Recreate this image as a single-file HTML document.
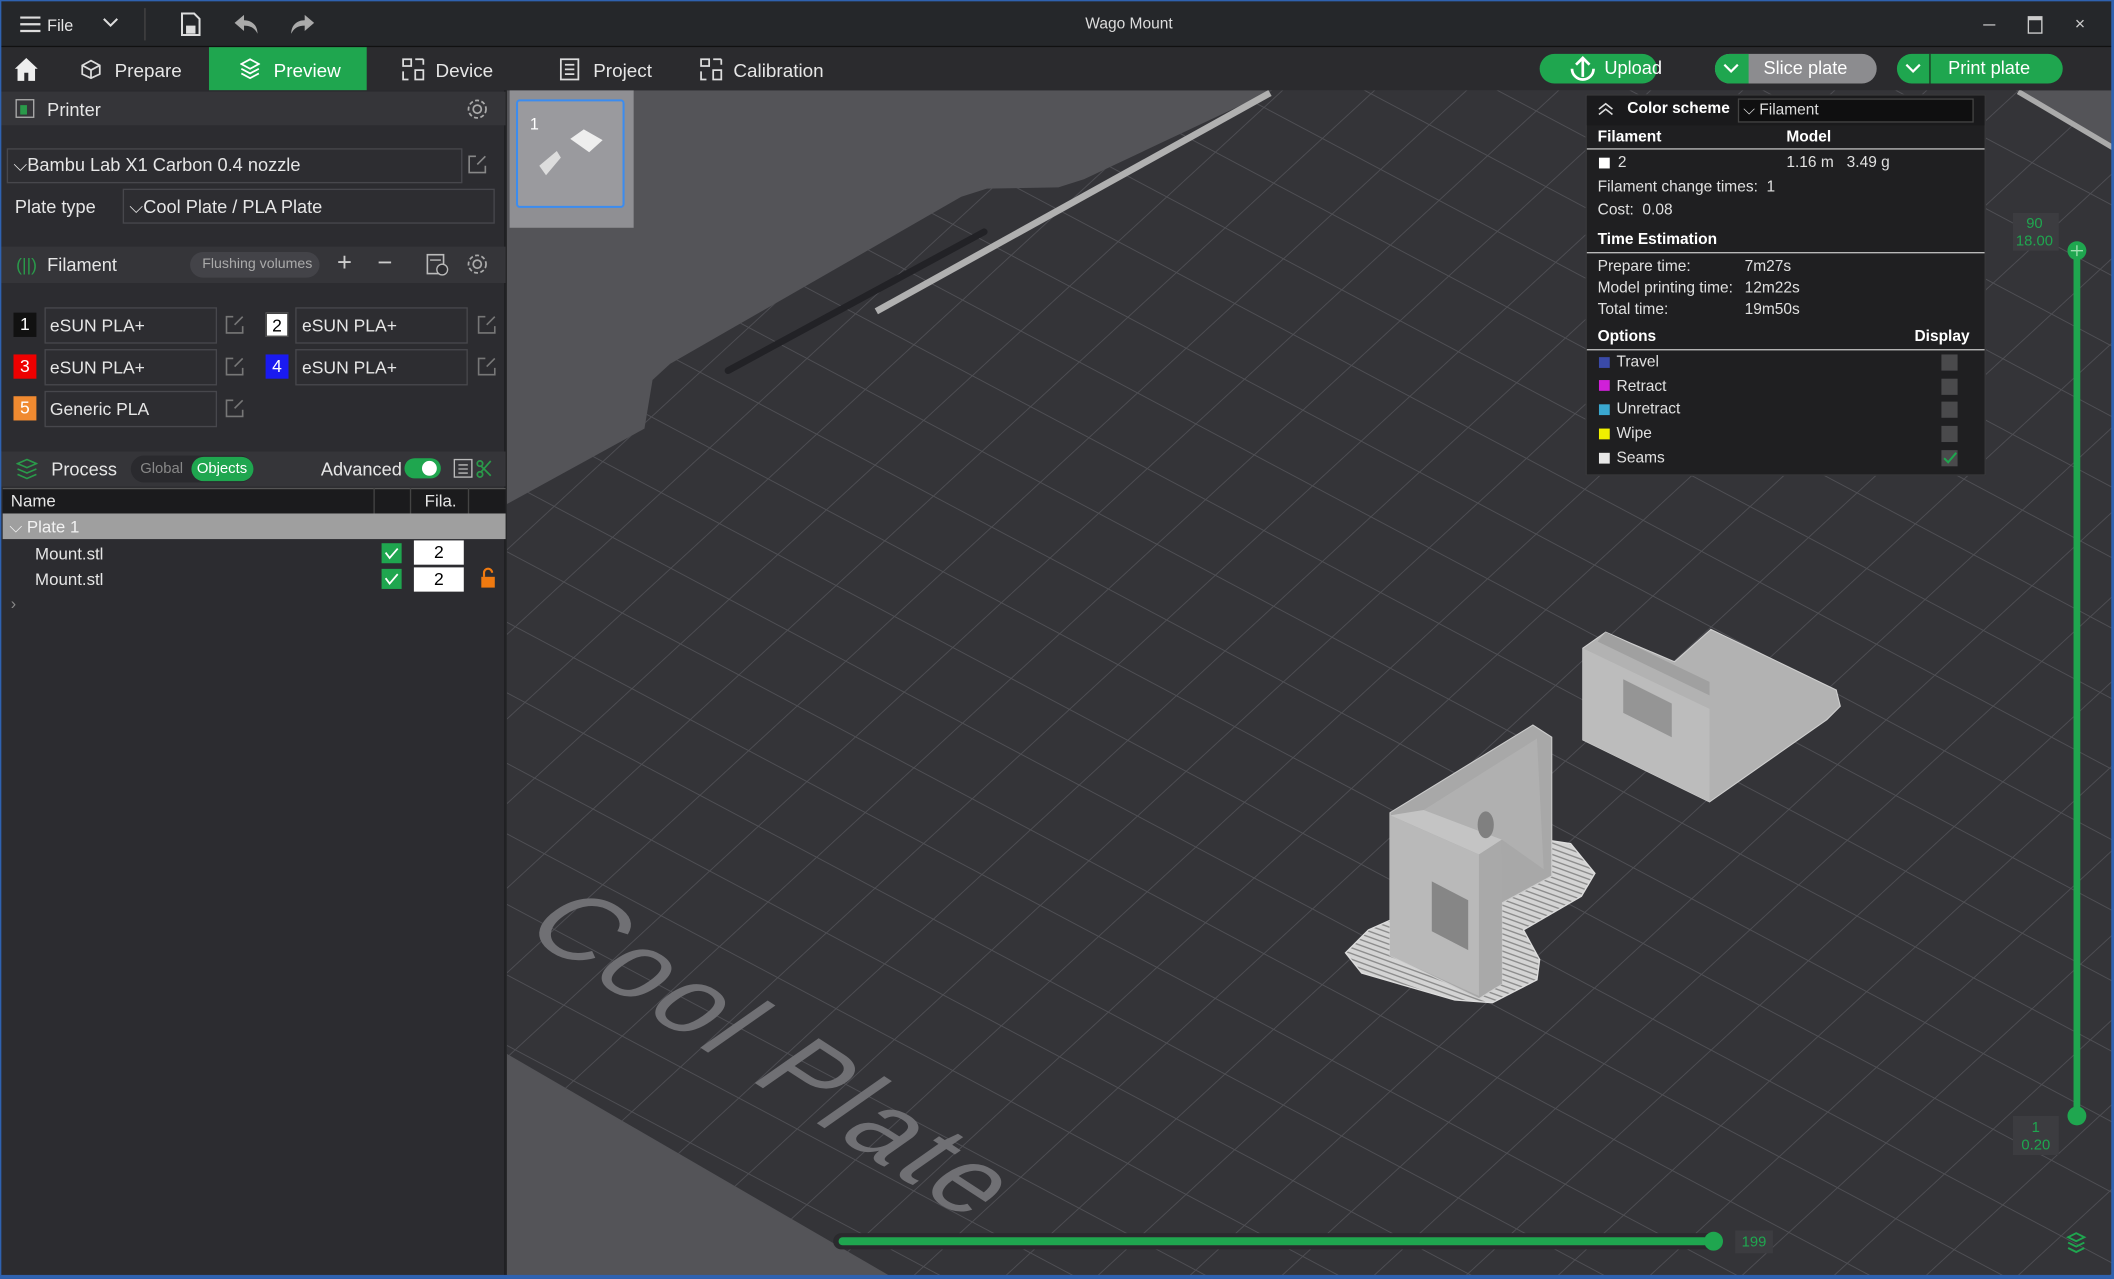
<!DOCTYPE html>
<html><head><meta charset="utf-8"><style>
*{margin:0;padding:0;box-sizing:border-box}
html,body{width:2114px;height:1279px;overflow:hidden;background:#27282a}
#w{position:absolute;left:0;top:0;width:1568px;height:949px;transform:scale(1.3482,1.3477);transform-origin:0 0;font-family:"Liberation Sans",sans-serif;color:#e6e6e6;overflow:hidden}
.a{position:absolute}
.t{position:absolute;white-space:nowrap}
.hdr{position:absolute;left:0;width:375px;background:#353539}
.box{position:absolute;border:1px solid #47474c;background:#2d2d31}
.sw{position:absolute;width:17px;height:18px;font-size:13px;text-align:center;line-height:18px}
.lg{position:absolute;font-size:11.5px;color:#e0e0e0;white-space:nowrap}
.cb{position:absolute;left:1440px;width:12px;height:12px;background:#4a4a4c}
.sq{position:absolute;left:1186px;width:8px;height:8px}
</style></head><body><div id="w">
<!-- title bar -->
<div class="a" style="left:0;top:0;width:1568px;height:35px;background:#25272a;border-top:1px solid #2f62b0;border-bottom:1px solid #111"></div>
<svg class="a" style="left:14px;top:11px" width="18" height="14"><path d="M1 2H16M1 7H16M1 12H16" stroke="#ddd" stroke-width="1.6"/></svg>
<div class="t" style="left:35px;top:12px;font-size:12px">File</div>
<svg class="a" style="left:76px;top:13px" width="12" height="8"><path d="M1 1L6 6L11 1" stroke="#ddd" stroke-width="1.5" fill="none"/></svg>
<div class="a" style="left:107px;top:6px;width:1px;height:24px;background:#444"></div>
<svg class="a" style="left:133px;top:9px" width="16" height="18"><path d="M2 1H11L15 5V17H2Z" fill="none" stroke="#ddd" stroke-width="1.5"/><rect x="5" y="10" width="7" height="6" fill="#ddd"/></svg>
<svg class="a" style="left:173px;top:10px" width="20" height="16"><path d="M8 1L1 7L8 13V9C13 9 16 11 18 15C18 9 14 5 8 5Z" fill="#aaa"/></svg>
<svg class="a" style="left:214px;top:10px" width="20" height="16"><path d="M12 1L19 7L12 13V9C7 9 4 11 2 15C2 9 6 5 12 5Z" fill="#aaa"/></svg>
<div class="t" style="left:805px;top:12px;font-size:11.5px;color:#ddd">Wago Mount</div>
<div class="a" style="left:1471px;top:18px;width:9px;height:1px;background:#bbb"></div>
<div class="a" style="left:1504px;top:12px;width:11px;height:13px;border:1px solid #ccc;border-top-width:3px"></div>
<div class="t" style="left:1539px;top:10px;font-size:13px;color:#ccc">×</div>
<!-- tab bar -->
<div class="a" style="left:0;top:35px;width:1568px;height:32px;background:#2b2b2e"></div>
<svg class="a" style="left:10px;top:42px" width="19" height="19"><path d="M9.5 1L1 9H3V18H8V12H11V18H16V9H18Z" fill="#eee"/></svg>
<svg class="a" style="left:60px;top:44px" width="15" height="15"><path d="M7.5 1L14 4.5V11L7.5 14L1 11V4.5Z M1 4.5L7.5 8L14 4.5 M7.5 8V14" fill="none" stroke="#ddd" stroke-width="1.3"/></svg>
<div class="t" style="left:85px;top:44px;font-size:14px">Prepare</div>
<div class="a" style="left:155px;top:35px;width:117px;height:32px;background:#1fa64f"></div>
<svg class="a" style="left:178px;top:43px" width="15" height="17"><path d="M7.5 1L14 4.5L7.5 8L1 4.5Z M1 8L7.5 11.5L14 8 M1 11.5L7.5 15L14 11.5" fill="none" stroke="#fff" stroke-width="1.3"/></svg>
<div class="t" style="left:203px;top:44px;font-size:14px;color:#fff">Preview</div>
<svg class="a" style="left:298px;top:43px" width="17" height="17"><path d="M1 1H7V6H1Z M10 1H16 M16 1V5 M1 10V16H5 M10 9H16V16H10Z" fill="none" stroke="#ddd" stroke-width="1.3"/></svg>
<div class="t" style="left:323px;top:44px;font-size:14px">Device</div>
<svg class="a" style="left:415px;top:43px" width="15" height="17"><path d="M1 1H14V16H1Z M4 5H11 M4 8.5H11 M4 12H11" fill="none" stroke="#ddd" stroke-width="1.3"/></svg>
<div class="t" style="left:440px;top:44px;font-size:14px">Project</div>
<svg class="a" style="left:519px;top:43px" width="17" height="17"><path d="M1 1H7V6H1Z M10 1H16 M16 1V5 M1 10V16H5 M10 9H16V16H10Z" fill="none" stroke="#ddd" stroke-width="1.3"/></svg>
<div class="t" style="left:544px;top:44px;font-size:14px">Calibration</div>
<!-- action buttons -->
<div class="a" style="left:1142px;top:40px;width:87px;height:22px;border-radius:11px;background:#1fa64f"></div>
<svg class="a" style="left:1162px;top:41px" width="24" height="21"><path d="M12 16V2 M7 7L12 2L17 7 M4 10A8 8 0 0 0 20 10" fill="none" stroke="#fff" stroke-width="2"/></svg>
<div class="t" style="left:1190px;top:43px;font-size:13.5px;color:#fff">Upload</div>
<div class="a" style="left:1272px;top:40px;width:120px;height:22px;border-radius:11px;background:#8c8c8f;overflow:hidden"><div style="width:25px;height:22px;background:#1fa64f"></div></div>
<svg class="a" style="left:1278px;top:47px" width="12" height="8"><path d="M1 1L6 6L11 1" stroke="#fff" stroke-width="1.6" fill="none"/></svg>
<div class="t" style="left:1308px;top:43px;font-size:13.5px;color:#fff">Slice plate</div>
<div class="a" style="left:1407px;top:40px;width:123px;height:22px;border-radius:11px;background:#1fa64f"></div>
<div class="a" style="left:1431px;top:40px;width:1px;height:22px;background:#1a3a22"></div>
<svg class="a" style="left:1413px;top:47px" width="12" height="8"><path d="M1 1L6 6L11 1" stroke="#fff" stroke-width="1.6" fill="none"/></svg>
<div class="t" style="left:1445px;top:43px;font-size:13.5px;color:#fff">Print plate</div>
<!-- left panel -->
<div class="a" style="left:0;top:67px;width:375px;height:882px;background:#2c2c30;border-right:1px solid #1d1d20"></div>
<div class="hdr" style="top:68px;height:25px"></div>
<svg class="a" style="left:11px;top:73px" width="15" height="15"><rect x="1" y="1" width="13" height="13" fill="none" stroke="#aaa"/><rect x="4" y="5" width="5" height="7" fill="#2a9a4a"/></svg>
<div class="t" style="left:35px;top:74px;font-size:13.5px">Printer</div>
<svg class="a" style="left:346px;top:73px" width="16" height="16"><circle cx="8" cy="8" r="3" fill="none" stroke="#aaa" stroke-width="1.3"/><circle cx="8" cy="8" r="6.5" fill="none" stroke="#aaa" stroke-width="1.3" stroke-dasharray="3 1.8"/></svg>
<div class="box" style="left:5px;top:110px;width:338px;height:26px"></div>
<div class="t" style="left:10px;top:115px;font-size:13.5px">⌵Bambu Lab X1 Carbon 0.4 nozzle</div>
<svg class="a" style="left:347px;top:115px" width="14" height="14"><path d="M6 1H1V13H13V8 M7 7L13 1" fill="none" stroke="#888" stroke-width="1.2"/></svg>
<div class="t" style="left:11px;top:146px;font-size:13.5px">Plate type</div>
<div class="box" style="left:91px;top:140px;width:276px;height:26px"></div>
<div class="t" style="left:96px;top:146px;font-size:13.5px">⌵Cool Plate / PLA Plate</div>
<div class="hdr" style="top:183px;height:27px"></div>
<div class="t" style="left:12px;top:189px;font-size:13px;color:#2a9a4a">(||)</div>
<div class="t" style="left:35px;top:189px;font-size:13.5px">Filament</div>
<div class="a" style="left:141px;top:187px;width:96px;height:19px;border-radius:10px;background:#434348"></div>
<div class="t" style="left:150px;top:190px;font-size:10.5px;color:#aaa">Flushing volumes</div>
<div class="t" style="left:250px;top:185px;font-size:19px;color:#ccc">+</div>
<div class="t" style="left:280px;top:185px;font-size:19px;color:#ccc">−</div>
<svg class="a" style="left:316px;top:188px" width="17" height="17"><rect x="1" y="1" width="12" height="14" fill="none" stroke="#bbb" stroke-width="1.2"/><path d="M3 5H11" stroke="#bbb"/><circle cx="12" cy="12" r="4" fill="#2c2c30" stroke="#bbb"/></svg>
<svg class="a" style="left:346px;top:188px" width="16" height="16"><circle cx="8" cy="8" r="3" fill="none" stroke="#aaa" stroke-width="1.3"/><circle cx="8" cy="8" r="6.5" fill="none" stroke="#aaa" stroke-width="1.3" stroke-dasharray="3 1.8"/></svg>
<!-- filament rows -->
<div class="sw" style="left:10px;top:232px;background:#111;color:#fff">1</div>
<div class="box" style="left:33px;top:228px;width:128px;height:27px"></div>
<div class="t" style="left:37px;top:234px;font-size:13px">eSUN PLA+</div>
<svg class="a" style="left:167px;top:234px" width="14" height="14"><path d="M6 1H1V13H13V8 M7 7L13 1" fill="none" stroke="#777" stroke-width="1.2"/></svg>
<div class="sw" style="left:197px;top:232px;background:#fff;color:#000;border:1px solid #444">2</div>
<div class="box" style="left:219px;top:228px;width:128px;height:27px"></div>
<div class="t" style="left:224px;top:234px;font-size:13px">eSUN PLA+</div>
<svg class="a" style="left:354px;top:234px" width="14" height="14"><path d="M6 1H1V13H13V8 M7 7L13 1" fill="none" stroke="#777" stroke-width="1.2"/></svg>
<div class="sw" style="left:10px;top:263px;background:#e00;color:#fff">3</div>
<div class="box" style="left:33px;top:259px;width:128px;height:27px"></div>
<div class="t" style="left:37px;top:265px;font-size:13px">eSUN PLA+</div>
<svg class="a" style="left:167px;top:265px" width="14" height="14"><path d="M6 1H1V13H13V8 M7 7L13 1" fill="none" stroke="#777" stroke-width="1.2"/></svg>
<div class="sw" style="left:197px;top:263px;background:#1a1af0;color:#fff">4</div>
<div class="box" style="left:219px;top:259px;width:128px;height:27px"></div>
<div class="t" style="left:224px;top:265px;font-size:13px">eSUN PLA+</div>
<svg class="a" style="left:354px;top:265px" width="14" height="14"><path d="M6 1H1V13H13V8 M7 7L13 1" fill="none" stroke="#777" stroke-width="1.2"/></svg>
<div class="sw" style="left:10px;top:294px;background:#f08a30;color:#fff">5</div>
<div class="box" style="left:33px;top:290px;width:128px;height:27px"></div>
<div class="t" style="left:37px;top:296px;font-size:13px">Generic PLA</div>
<svg class="a" style="left:167px;top:296px" width="14" height="14"><path d="M6 1H1V13H13V8 M7 7L13 1" fill="none" stroke="#777" stroke-width="1.2"/></svg>
<!-- process -->
<div class="hdr" style="top:335px;height:26px"></div>
<svg class="a" style="left:12px;top:340px" width="16" height="16"><path d="M1 4L8 1L15 4L8 7Z M1 8L8 11L15 8 M1 12L8 15L15 12" fill="none" stroke="#2a9a4a" stroke-width="1.2"/></svg>
<div class="t" style="left:38px;top:341px;font-size:13.5px">Process</div>
<div class="a" style="left:97px;top:338px;width:91px;height:20px;border-radius:10px;background:#2a2a2e"></div>
<div class="t" style="left:104px;top:342px;font-size:11px;color:#888">Global</div>
<div class="a" style="left:142px;top:339px;width:46px;height:18px;border-radius:9px;background:#1fa64f"></div>
<div class="t" style="left:146px;top:342px;font-size:11px;color:#fff">Objects</div>
<div class="t" style="left:238px;top:341px;font-size:13.5px">Advanced</div>
<div class="a" style="left:300px;top:340px;width:27px;height:15px;border-radius:8px;background:#1fa64f"></div>
<div class="a" style="left:313px;top:342px;width:11px;height:11px;border-radius:6px;background:#fff"></div>
<svg class="a" style="left:336px;top:340px" width="30" height="16"><rect x="1" y="1" width="13" height="13" fill="none" stroke="#bbb"/><path d="M4 5H11M4 8H11M4 11H11" stroke="#bbb"/><circle cx="20" cy="4" r="2" fill="none" stroke="#2a9a4a" stroke-width="1.3"/><circle cx="20" cy="12" r="2" fill="none" stroke="#2a9a4a" stroke-width="1.3"/><path d="M21 6L28 13M21 10L28 2" stroke="#2a9a4a" stroke-width="1.3"/></svg>
<div class="a" style="left:2px;top:362px;width:373px;height:19px;background:#1b1b1d;border-top:1px solid #555"></div>
<div class="a" style="left:277px;top:362px;width:1px;height:19px;background:#444"></div>
<div class="a" style="left:304px;top:362px;width:1px;height:19px;background:#444"></div>
<div class="a" style="left:347px;top:362px;width:1px;height:19px;background:#444"></div>
<div class="t" style="left:8px;top:365px;font-size:12.5px">Name</div>
<div class="t" style="left:315px;top:365px;font-size:12.5px">Fila.</div>
<div class="a" style="left:2px;top:381px;width:373px;height:19px;background:#9f9f9f"></div>
<div class="t" style="left:7px;top:384px;font-size:12.5px;color:#f2f2f2">⌵ Plate 1</div>
<div class="t" style="left:26px;top:404px;font-size:12.5px">Mount.stl</div>
<div class="t" style="left:26px;top:423px;font-size:12.5px">Mount.stl</div>
<svg class="a" style="left:283px;top:403px" width="15" height="15"><rect width="15" height="15" fill="#1fa64f"/><path d="M3 7L6 11L12 4" stroke="#fff" stroke-width="1.3" fill="none"/></svg>
<svg class="a" style="left:283px;top:422px" width="15" height="15"><rect width="15" height="15" fill="#1fa64f"/><path d="M3 7L6 11L12 4" stroke="#fff" stroke-width="1.3" fill="none"/></svg>
<div class="a" style="left:307px;top:401px;width:37px;height:18px;background:#fff;color:#000;font-size:13px;text-align:center;line-height:18px">2</div>
<div class="a" style="left:307px;top:421px;width:37px;height:18px;background:#fff;color:#000;font-size:13px;text-align:center;line-height:18px">2</div>
<svg class="a" style="left:356px;top:421px" width="12" height="16"><path d="M3 7V4A3 3 0 0 1 9 4" fill="none" stroke="#f07a10" stroke-width="1.6"/><rect x="1" y="7" width="10" height="8" fill="#f07a10"/></svg>
<div class="t" style="left:8px;top:441px;font-size:12px;color:#888">›</div>
<!-- viewport -->
<svg class="a" style="left:376px;top:67px" width="1192" height="882" viewBox="376 67 1192 882">
<defs>
<pattern id="g" width="49" height="49" patternUnits="userSpaceOnUse" patternTransform="matrix(0.883 0.469 -0.736 0.677 0 0)">
<path d="M0 0H49 M0 0V49" stroke="#4f4f54" stroke-width="1.4" fill="none"/>
</pattern>
<pattern id="st" width="4" height="4" patternUnits="userSpaceOnUse" patternTransform="rotate(20)">
<rect width="4" height="4" fill="#d4d4d4"/><path d="M0 2H4" stroke="#8a8a8a" stroke-width="1"/>
</pattern>
<clipPath id="bed"><polygon points="376,374 478,318 484,282 497,270 713,146 732,140 785,139 804,133 944,67 1495,67 1568,112 1568,949 664,949 376,782"/></clipPath>
</defs>
<rect x="376" y="67" width="1192" height="882" fill="#545458"/>
<polygon points="376,374 478,318 484,282 497,270 713,146 732,140 785,139 804,133 944,67 1495,67 1568,112 1568,949 664,949 376,782" fill="#343438"/>
<rect x="376" y="67" width="1192" height="882" fill="url(#g)" clip-path="url(#bed)"/>
<path d="M1497 68L1568 110" stroke="#aaa" stroke-width="4"/>
<path d="M540 275L730 172" stroke="#222226" stroke-width="5" stroke-linecap="round"/>
<path d="M650 231L942 69" stroke="#b0b0b0" stroke-width="5"/>
<text x="0" y="0" transform="translate(385,690) rotate(33) skewX(-22)" font-family="Liberation Sans" font-size="78" fill="#707074" letter-spacing="4">Cool Plate</text>
<!-- model 1 -->
<polygon points="998,707 1015,690 1033,682 1114,640 1145,623 1165,626 1183,648 1173,665 1130,690 1142,712 1140,727 1107,744 1079,742 1010,722" fill="url(#st)" stroke="#ddd" stroke-width="1"/>
<polygon points="1031,603 1137,538 1151,547 1151,650 1114,670 1114,730 1097,741 1031,709" fill="#a8a8a8" stroke="#ccc" stroke-width="0.8"/>
<polygon points="1056,601 1140,548 1145,645 1114,623" fill="#b0b0b0"/>
<polygon points="1031,605 1056,601 1114,623 1097,634" fill="#c4c4c4"/>
<polygon points="1031,605 1097,634 1097,739 1031,709" fill="#b9b9b9"/>
<polygon points="1097,634 1114,623 1114,730 1097,740" fill="#a9a9a9"/>
<ellipse cx="1102" cy="612" rx="6" ry="10" fill="#808080"/>
<polygon points="1062,654 1089,668 1089,705 1062,691" fill="#868686"/>
<!-- model 2 -->
<polygon points="1174,481 1191,469 1209,477 1242,491 1269,467 1362,512 1365,524 1355,534 1268,595 1174,549" fill="#b2b2b2" stroke="#d0d0d0" stroke-width="0.8"/>
<polygon points="1174,481 1268,526 1268,595 1174,549" fill="#bcbcbc"/>
<polygon points="1204,504 1240,522 1240,547 1204,529" fill="#959595"/>
<polygon points="1191,469 1268,506 1268,516 1185,476" fill="#a0a0a0"/>
<!-- plate thumbnail -->
<rect x="378" y="67" width="92" height="102" fill="#8f8f93"/>
<rect x="383.5" y="74.5" width="79" height="79" rx="2" fill="#9a9a9e" stroke="#3b8cf0" stroke-width="1.5"/>
<text x="393" y="96" font-family="Liberation Sans" font-size="12" fill="#fff">1</text>
<polygon points="423,103 433,96 447,104 437,113" fill="#eee"/>
<polygon points="400,123 413,112 416,117 405,130" fill="#ddd"/>
<!-- sliders -->
<rect x="1493" y="158" width="34" height="28" fill="#3c3c40"/>
<text x="1509" y="169" font-family="Liberation Sans" font-size="11" fill="#1fa64f" text-anchor="middle">90</text>
<text x="1509" y="182" font-family="Liberation Sans" font-size="11" fill="#1fa64f" text-anchor="middle">18.00</text>
<rect x="1538" y="186" width="5" height="642" fill="#1fa64f"/>
<circle cx="1540.5" cy="186" r="7" fill="#1fa64f"/>
<path d="M1536 186H1545M1540.5 182V190" stroke="#9fe0b0" stroke-width="1"/>
<circle cx="1540.5" cy="828" r="7" fill="#1fa64f"/>
<rect x="1493" y="828" width="34" height="29" fill="#3c3c40"/>
<text x="1510" y="840" font-family="Liberation Sans" font-size="11" fill="#1fa64f" text-anchor="middle">1</text>
<text x="1510" y="853" font-family="Liberation Sans" font-size="11" fill="#1fa64f" text-anchor="middle">0.20</text>
<rect x="618" y="915" width="657" height="12" rx="6" fill="#2a2a2d"/>
<rect x="622" y="918" width="649" height="6" rx="3" fill="#1fa64f"/>
<circle cx="1271" cy="921" r="7" fill="#1fa64f"/>
<rect x="1287" y="913" width="28" height="17" fill="#3c3c40"/>
<text x="1301" y="925" font-family="Liberation Sans" font-size="11" fill="#1fa64f" text-anchor="middle">199</text>
<path d="M1534 918L1540 915L1546 918L1540 921Z M1534 922L1540 925L1546 922 M1534 926L1540 929L1546 926" fill="none" stroke="#1fa64f" stroke-width="1.4"/>
</svg>
<!-- legend -->
<div class="a" style="left:1176px;top:70px;width:297px;height:283px;background:#1f1f21;border:1px solid #3a3a3c"></div>
<div class="a" style="left:1177px;top:71px;width:295px;height:22px;background:#1a1a1c"></div>
<svg class="a" style="left:1184px;top:75px" width="14" height="12"><path d="M2 6L7 2L12 6M2 10L7 6L12 10" fill="none" stroke="#ddd" stroke-width="1.2"/></svg>
<div class="lg" style="left:1207px;top:75px;font-weight:bold;font-size:11.5px;color:#fff">Color scheme</div>
<div class="a" style="left:1289px;top:73px;width:175px;height:18px;background:#0f0f10;border:1px solid #444"></div>
<div class="lg" style="left:1293px;top:76px;color:#ddd">⌵ Filament</div>
<div class="lg" style="left:1185px;top:96px;font-weight:bold;color:#fff">Filament</div>
<div class="lg" style="left:1325px;top:96px;font-weight:bold;color:#fff">Model</div>
<div class="a" style="left:1177px;top:110px;width:295px;height:1px;background:#bbb"></div>
<div class="sq" style="top:117px;background:#fff"></div>
<div class="lg" style="left:1200px;top:115px">2</div>
<div class="lg" style="left:1325px;top:115px">1.16 m &nbsp; 3.49 g</div>
<div class="lg" style="left:1185px;top:133px">Filament change times:&nbsp; 1</div>
<div class="lg" style="left:1185px;top:150px">Cost:&nbsp; 0.08</div>
<div class="lg" style="left:1185px;top:172px;font-weight:bold;color:#fff">Time Estimation</div>
<div class="a" style="left:1177px;top:187px;width:295px;height:1px;background:#bbb"></div>
<div class="lg" style="left:1185px;top:192px">Prepare time:</div><div class="lg" style="left:1294px;top:192px">7m27s</div>
<div class="lg" style="left:1185px;top:208px">Model printing time:</div><div class="lg" style="left:1294px;top:208px">12m22s</div>
<div class="lg" style="left:1185px;top:224px">Total time:</div><div class="lg" style="left:1294px;top:224px">19m50s</div>
<div class="lg" style="left:1185px;top:244px;font-weight:bold;color:#fff">Options</div>
<div class="lg" style="left:1420px;top:244px;font-weight:bold;color:#fff">Display</div>
<div class="a" style="left:1177px;top:259px;width:295px;height:1px;background:#bbb"></div>
<div class="sq" style="top:265px;background:#3a4aa8"></div><div class="lg" style="left:1199px;top:263px">Travel</div><div class="cb" style="top:263px"></div>
<div class="sq" style="top:282px;background:#d020d8"></div><div class="lg" style="left:1199px;top:281px">Retract</div><div class="cb" style="top:281px"></div>
<div class="sq" style="top:300px;background:#3aa8d0"></div><div class="lg" style="left:1199px;top:298px">Unretract</div><div class="cb" style="top:298px"></div>
<div class="sq" style="top:318px;background:#f0f000"></div><div class="lg" style="left:1199px;top:316px">Wipe</div><div class="cb" style="top:316px"></div>
<div class="sq" style="top:336px;background:#e8e8e8"></div><div class="lg" style="left:1199px;top:334px">Seams</div><div class="cb" style="top:334px"></div>
<svg class="a" style="left:1441px;top:335px" width="11" height="10"><path d="M1 5L4 8L10 1" stroke="#1fa64f" stroke-width="1.5" fill="none"/></svg>
<div class="a" style="left:0;top:946px;width:1568px;height:3px;background:#2f62b0"></div>
<div class="a" style="left:1566px;top:0;width:2px;height:949px;background:#2f62b0"></div>
<div class="a" style="left:0;top:0;width:1px;height:949px;background:#2f62b0"></div>
</div></body></html>
